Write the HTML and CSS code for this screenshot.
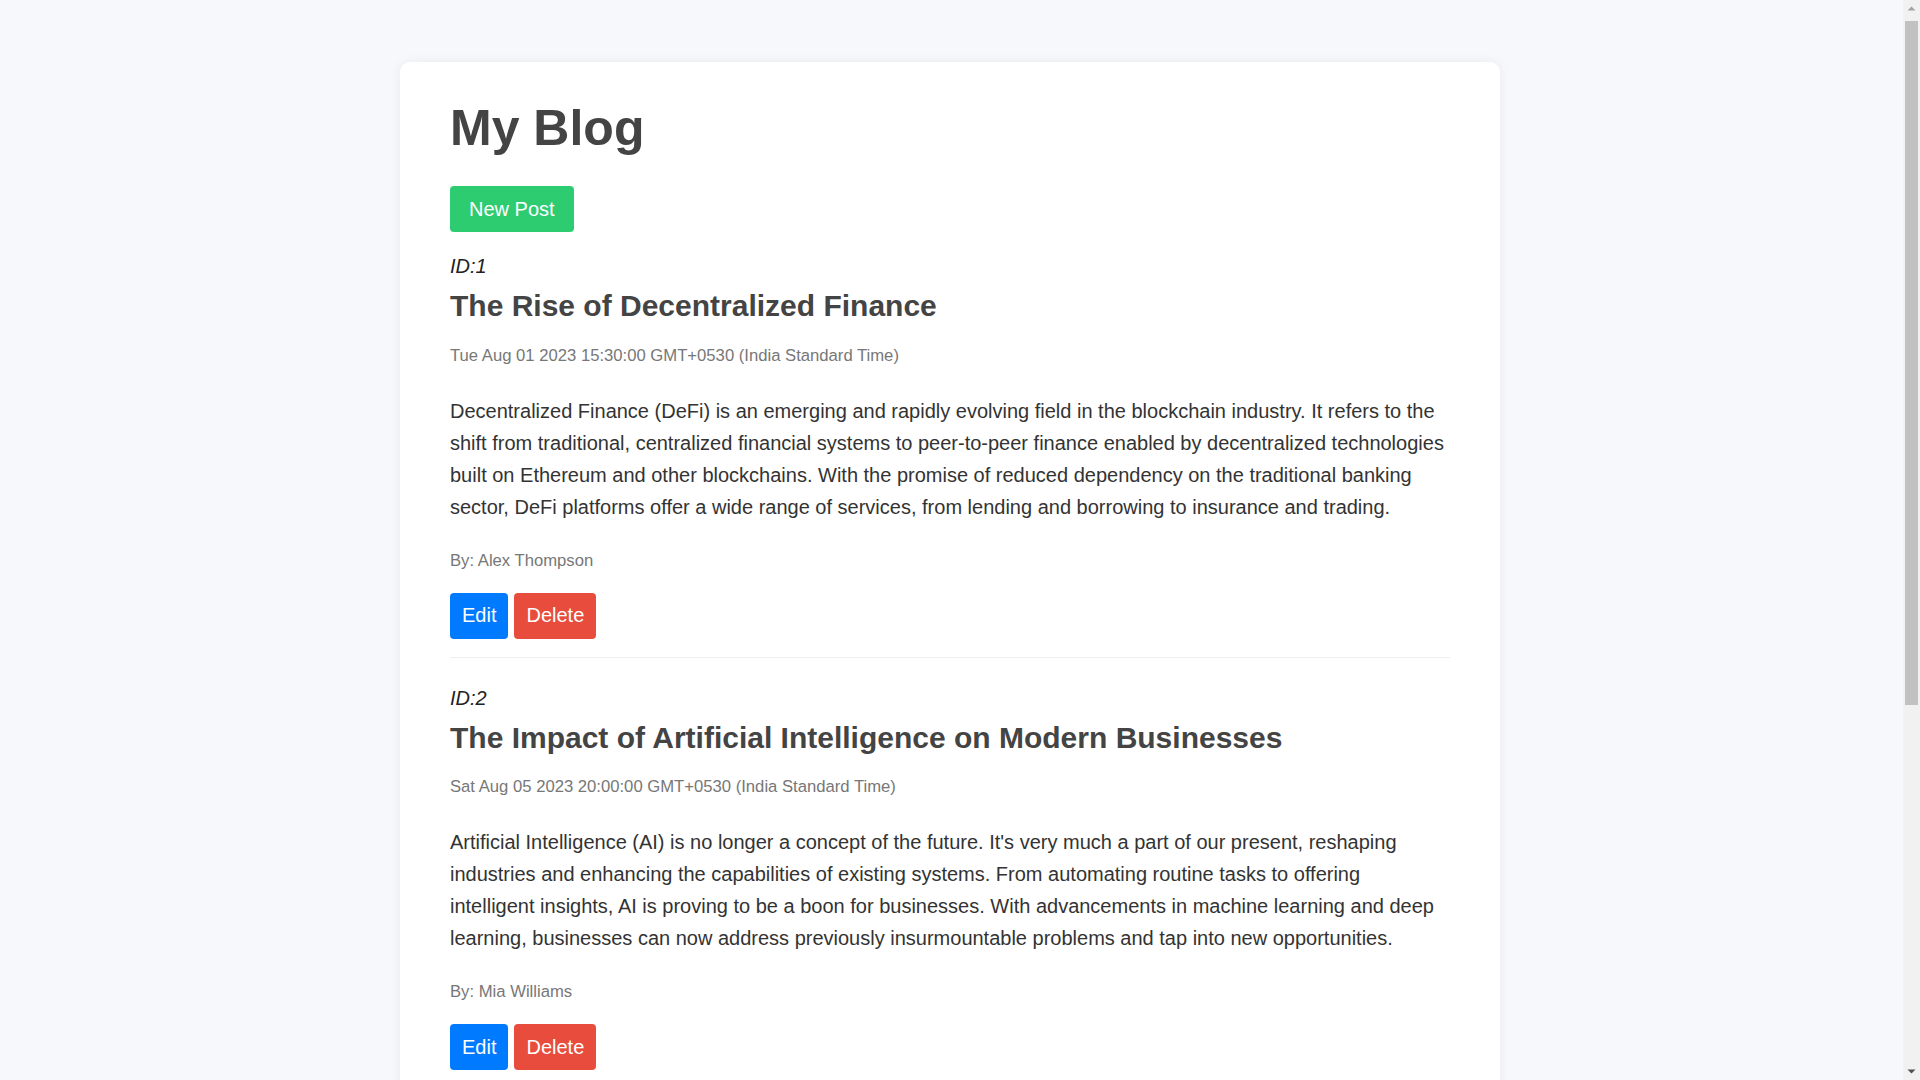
FILE: index.html
```html
<!DOCTYPE html>
<html lang="en">
<head>
<meta charset="utf-8">
<title>My Blog</title>
<link rel="stylesheet" href="styles.css">
</head>
<body>
<div class="container">
  <h1 class="page-title">My Blog</h1>
  <button class="btn btn-new">New Post</button>

  <div class="post">
    <p class="post-id"><em>ID:1</em></p>
    <h2 class="post-title">The Rise of Decentralized Finance</h2>
    <p class="post-date"><small>Tue Aug 01 2023 15:30:00 GMT+0530 (India Standard Time)</small></p>
    <p class="post-content">Decentralized Finance (DeFi) is an emerging and rapidly evolving field in the blockchain industry. It refers to the shift from traditional, centralized financial systems to peer-to-peer finance enabled by decentralized technologies built on Ethereum and other blockchains. With the promise of reduced dependency on the traditional banking sector, DeFi platforms offer a wide range of services, from lending and borrowing to insurance and trading.</p>
    <p class="post-author"><small>By: Alex Thompson</small></p>
    <div class="post-actions">
      <button class="btn btn-edit">Edit</button>
      <button class="btn btn-delete">Delete</button>
    </div>
  </div>

  <div class="post">
    <p class="post-id"><em>ID:2</em></p>
    <h2 class="post-title">The Impact of Artificial Intelligence on Modern Businesses</h2>
    <p class="post-date"><small>Sat Aug 05 2023 20:00:00 GMT+0530 (India Standard Time)</small></p>
    <p class="post-content">Artificial Intelligence (AI) is no longer a concept of the future. It's very much a part of our present, reshaping industries and enhancing the capabilities of existing systems. From automating routine tasks to offering intelligent insights, AI is proving to be a boon for businesses. With advancements in machine learning and deep learning, businesses can now address previously insurmountable problems and tap into new opportunities.</p>
    <p class="post-author"><small>By: Mia Williams</small></p>
    <div class="post-actions">
      <button class="btn btn-edit">Edit</button>
      <button class="btn btn-delete">Delete</button>
    </div>
  </div>

  <div class="post">
    <p class="post-id"><em>ID:3</em></p>
    <h2 class="post-title">Sustainable Living: Tips for an Eco-Friendly Lifestyle</h2>
    <p class="post-date"><small>Thu Aug 10 2023 13:00:00 GMT+0530 (India Standard Time)</small></p>
    <p class="post-content">Sustainability is more than just a buzzword; it's a way of life. As the effects of climate change become more pronounced, there's a growing realization about the need to live sustainably. From reducing waste and conserving energy to supporting eco-friendly products, there are numerous ways we can contribute to a healthier planet.</p>
    <p class="post-author"><small>By: Samuel Green</small></p>
    <div class="post-actions">
      <button class="btn btn-edit">Edit</button>
      <button class="btn btn-delete">Delete</button>
    </div>
  </div>
</div>

<div class="scrollbar" aria-hidden="true">
  <svg class="sb-arrow sb-up" width="17" height="17" viewBox="0 0 17 17"><path d="M4.5 10.5 L8.5 6.5 L12.5 10.5 Z" fill="#a3a3a3"/></svg>
  <div class="sb-track"><div class="sb-thumb"></div></div>
  <svg class="sb-arrow sb-down" width="17" height="17" viewBox="0 0 17 17"><path d="M4.5 6.5 L8.5 10.5 L12.5 6.5 Z" fill="#505050"/></svg>
</div>
</body>
</html>
```

FILE: styles.css
```css
html, body {
  margin: 0;
  padding: 0;
}

html {
  scrollbar-width: none;
}

body {
  background: #f7f8fc;
  font-family: "Liberation Sans", Arial, Helvetica, sans-serif;
  font-size: 20px;
  color: #333;
  padding-right: 20px;
}

.container {
  width: 1000px;
  margin: 62px auto 62px;
  padding: 1px 50px 20px;
  background: #fff;
  border-radius: 10px;
  box-shadow: 0 0 12px rgba(0, 0, 0, 0.06);
}

.page-title {
  font-size: 50px;
  font-weight: bold;
  color: #444;
  margin: 35.5px 0 29.5px;
  line-height: normal;
}

.btn {
  font-family: "Liberation Sans", Arial, Helvetica, sans-serif;
  font-size: 20px;
  line-height: 23px;
  color: #fff;
  border: none;
  border-radius: 4px;
  padding: 11.5px 12px;
  cursor: pointer;
}

.btn-new {
  background: #2ecc71;
  padding: 11.5px 19px;
  display: block;
}

.btn-edit {
  background: #007bff;
}

.btn-delete {
  background: #e74c3c;
}

.post {
  border-bottom: 1px solid #eee;
  padding-bottom: 18px;
}

.post:first-of-type .post-id {
  margin-top: 23px;
}

.post + .post .post-id {
  margin-top: 29px;
}

.post-id {
  color: #222;
  margin: 0;
  line-height: 23px;
}

.post-title {
  font-size: 30px;
  font-weight: bold;
  color: #444;
  margin: 11px 0 19.5px;
  line-height: normal;
}

.post-date,
.post-author {
  margin: 0;
  color: #777;
  line-height: normal;
}

.post-content {
  margin: 29px 0 25px;
  line-height: 32px;
  color: #333;
}

.post-actions {
  display: flex;
  gap: 6px;
  margin-top: 22px;
}

/* imitation of the browser's vertical scrollbar */
.scrollbar {
  position: fixed;
  top: 0;
  right: 0;
  width: 17px;
  height: 100vh;
  background: #f1f1f1;
  display: flex;
  flex-direction: column;
}

.sb-arrow {
  flex: 0 0 17px;
  display: block;
}

.sb-track {
  flex: 1;
  padding: 4px 2px 0;
}

.sb-thumb {
  height: 684px;
  background: #c1c1c1;
}
```
